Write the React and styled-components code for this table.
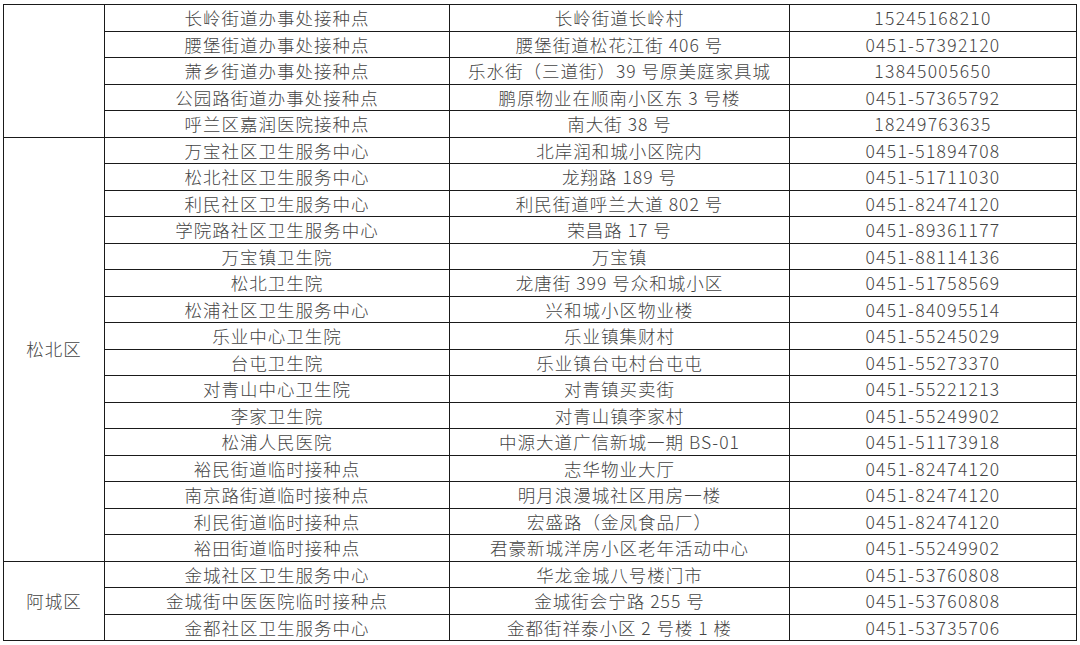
import React from 'react';
import styled, { createGlobalStyle } from 'styled-components';

const GlobalStyle = createGlobalStyle`
  html, body {
    margin: 0;
    padding: 0;
    background: #ffffff;
  }
`;

const Page = styled.div`
  width: 1080px;
  height: 645px;
  overflow: hidden;
  background: #fff;
  padding: 4px 0 0 3px;
  box-sizing: border-box;
`;

const Table = styled.table`
  border-collapse: collapse;
  table-layout: fixed;
  width: 1073px;
  font-family: "Noto Sans CJK SC", "Liberation Sans", sans-serif;
  font-size: 17.5px;
  font-weight: 300;
  color: #444444;
`;

const Col = styled.col`
  width: ${(p) => p.$w}px;
`;

const Cell = styled.td`
  border: 1.4px solid #1a1a1a;
  height: 25.5px;
  padding: 0;
  text-align: center;
  vertical-align: middle;
  line-height: 1;
  white-space: nowrap;
  letter-spacing: ${(p) => (p.$phone ? '1.3px' : '1px')};
`;

const rows = [
  ['长岭街道办事处接种点', '长岭街道长岭村', '15245168210'],
  ['腰堡街道办事处接种点', '腰堡街道松花江街 406 号', '0451-57392120'],
  ['萧乡街道办事处接种点', '乐水街（三道街）39 号原美庭家具城', '13845005650'],
  ['公园路街道办事处接种点', '鹏原物业在顺南小区东 3 号楼', '0451-57365792'],
  ['呼兰区嘉润医院接种点', '南大街 38 号', '18249763635'],
  ['万宝社区卫生服务中心', '北岸润和城小区院内', '0451-51894708'],
  ['松北社区卫生服务中心', '龙翔路 189 号', '0451-51711030'],
  ['利民社区卫生服务中心', '利民街道呼兰大道 802 号', '0451-82474120'],
  ['学院路社区卫生服务中心', '荣昌路 17 号', '0451-89361177'],
  ['万宝镇卫生院', '万宝镇', '0451-88114136'],
  ['松北卫生院', '龙唐街 399 号众和城小区', '0451-51758569'],
  ['松浦社区卫生服务中心', '兴和城小区物业楼', '0451-84095514'],
  ['乐业中心卫生院', '乐业镇集财村', '0451-55245029'],
  ['台屯卫生院', '乐业镇台屯村台屯屯', '0451-55273370'],
  ['对青山中心卫生院', '对青镇买卖街', '0451-55221213'],
  ['李家卫生院', '对青山镇李家村', '0451-55249902'],
  ['松浦人民医院', '中源大道广信新城一期 BS-01', '0451-51173918'],
  ['裕民街道临时接种点', '志华物业大厅', '0451-82474120'],
  ['南京路街道临时接种点', '明月浪漫城社区用房一楼', '0451-82474120'],
  ['利民街道临时接种点', '宏盛路（金凤食品厂）', '0451-82474120'],
  ['裕田街道临时接种点', '君豪新城洋房小区老年活动中心', '0451-55249902'],
  ['金城社区卫生服务中心', '华龙金城八号楼门市', '0451-53760808'],
  ['金城街中医医院临时接种点', '金城街会宁路 255 号', '0451-53760808'],
  ['金都社区卫生服务中心', '金都街祥泰小区 2 号楼 1 楼', '0451-53735706'],
];

const districts = {
  0: { name: '', span: 5 },
  5: { name: '松北区', span: 16 },
  21: { name: '阿城区', span: 3 },
};

export default function App() {
  return (
    <>
      <GlobalStyle />
      <Page>
        <Table>
          <colgroup>
            <Col $w={101} />
            <Col $w={345} />
            <Col $w={340} />
            <Col $w={287} />
          </colgroup>
          <tbody>
            {rows.map((r, i) => (
              <tr key={i}>
                {districts[i] && (
                  <Cell rowSpan={districts[i].span}>{districts[i].name}</Cell>
                )}
                <Cell>{r[0]}</Cell>
                <Cell>{r[1]}</Cell>
                <Cell $phone>{r[2]}</Cell>
              </tr>
            ))}
          </tbody>
        </Table>
      </Page>
    </>
  );
}
